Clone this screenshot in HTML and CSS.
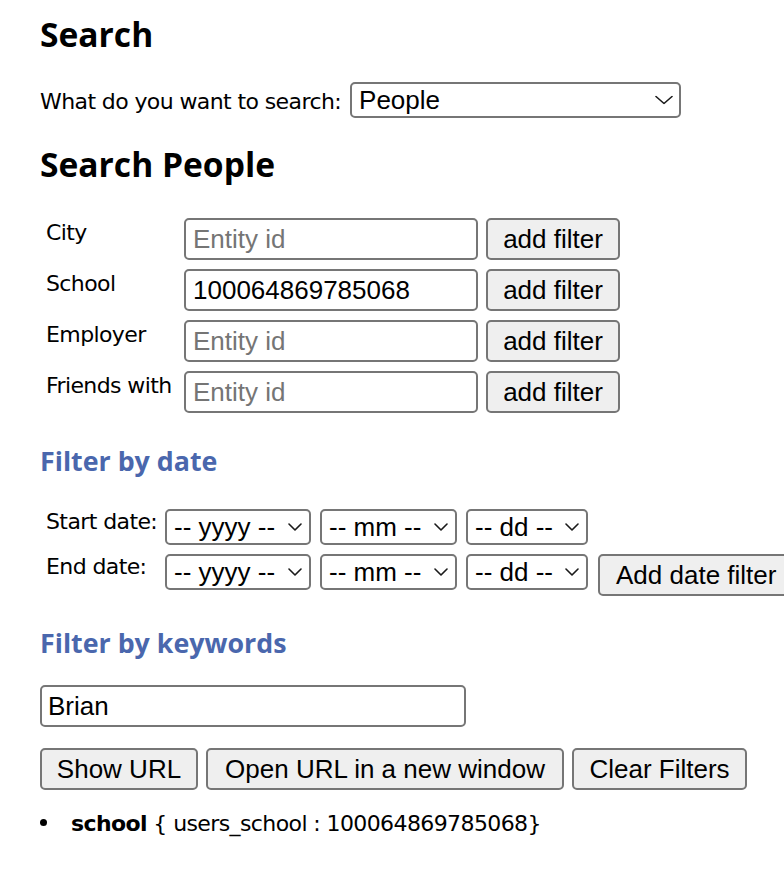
FILE: index.html
```html
<!DOCTYPE html>
<html lang="en">
<head>
<meta charset="utf-8">
<title>Search</title>
<link rel="stylesheet" href="styles.css">
</head>
<body>
<div class="page">
  <h2 class="title">Search</h2>
  <div class="type-row">
    <label class="type-label" for="type">What do you want to search:</label>
    <span class="sel sel-type">
      <select id="type"><option>People</option></select>
      <svg class="chev chev-lg" viewBox="0 0 18 9" width="18" height="9"><polyline points="1,1 9,8 17,1" /></svg>
    </span>
  </div>

  <h2 class="title title-people">Search People</h2>

  <div class="entity-grid">
    <span class="ent-label">City</span>
    <input class="ent-input" type="text" placeholder="Entity id">
    <button class="btn btn-add">add filter</button>

    <span class="ent-label">School</span>
    <input class="ent-input" type="text" value="100064869785068">
    <button class="btn btn-add">add filter</button>

    <span class="ent-label">Employer</span>
    <input class="ent-input" type="text" placeholder="Entity id">
    <button class="btn btn-add">add filter</button>

    <span class="ent-label">Friends with</span>
    <input class="ent-input" type="text" placeholder="Entity id">
    <button class="btn btn-add">add filter</button>
  </div>

  <h3 class="sub sub-date">Filter by date</h3>

  <div class="date-rows">
    <div class="date-row">
      <span class="date-label">Start date:</span>
      <span class="sel sel-y"><select><option>-- yyyy --</option></select><svg class="chev" viewBox="0 0 14 8" width="14" height="8"><polyline points="1,1 7,7 13,1" /></svg></span>
      <span class="sel sel-m"><select><option>-- mm --</option></select><svg class="chev" viewBox="0 0 14 8" width="14" height="8"><polyline points="1,1 7,7 13,1" /></svg></span>
      <span class="sel sel-d"><select><option>-- dd --</option></select><svg class="chev" viewBox="0 0 14 8" width="14" height="8"><polyline points="1,1 7,7 13,1" /></svg></span>
    </div>
    <div class="date-row">
      <span class="date-label">End date:</span>
      <span class="sel sel-y"><select><option>-- yyyy --</option></select><svg class="chev" viewBox="0 0 14 8" width="14" height="8"><polyline points="1,1 7,7 13,1" /></svg></span>
      <span class="sel sel-m"><select><option>-- mm --</option></select><svg class="chev" viewBox="0 0 14 8" width="14" height="8"><polyline points="1,1 7,7 13,1" /></svg></span>
      <span class="sel sel-d"><select><option>-- dd --</option></select><svg class="chev" viewBox="0 0 14 8" width="14" height="8"><polyline points="1,1 7,7 13,1" /></svg></span>
      <button class="btn btn-date">Add date filter</button>
    </div>
  </div>

  <h3 class="sub sub-kw">Filter by keywords</h3>

  <input class="kw-input" type="text" value="Brian">

  <div class="actions">
    <button class="btn btn-show">Show URL</button>
    <button class="btn btn-open">Open URL in a new window</button>
    <button class="btn btn-clear">Clear Filters</button>
  </div>

  <ul class="filters">
    <li class="filter-item"><b>school</b> { users_school : 100064869785068}</li>
  </ul>
</div>
</body>
</html>
```

FILE: styles.css
```css
html {
  overflow: hidden;
}

body {
  margin: 0;
  background: #ffffff;
  color: #000000;
  font-family: "DejaVu Sans", "Open Sans", sans-serif;
  font-size: 22px;
  line-height: 26px;
  letter-spacing: -0.6px;
}

.page {
  padding: 15px 0 0 40px;
}

.title {
  margin: 0;
  font-family: "Open Sans", "DejaVu Sans", sans-serif;
  font-size: 33.6px;
  line-height: 38px;
  font-weight: 700;
  letter-spacing: 0;
}

.title-people {
  margin-top: 27px;
}

.type-row {
  margin-top: 29px;
  display: flex;
  align-items: baseline;
  gap: 9px;
}

.type-label {
  white-space: nowrap;
}

/* form controls */
input, select, button {
  font-family: "Liberation Sans", Arial, sans-serif;
  font-size: 26px;
  letter-spacing: 0;
  color: #000000;
  box-sizing: border-box;
  margin: 0;
}

.sel {
  position: relative;
  display: inline-flex;
  flex-shrink: 0;
}

.sel select {
  -webkit-appearance: none;
  appearance: none;
  height: 36px;
  border: 2px solid #767676;
  border-radius: 5px;
  background: #ffffff;
  padding: 0 0 0 7px;
  width: 100%;
}

.chev {
  position: absolute;
  right: 9px;
  top: 50%;
  transform: translateY(-50%);
  pointer-events: none;
}

.chev polyline {
  fill: none;
  stroke: #1a1a1a;
  stroke-width: 1.6;
  stroke-linecap: round;
  stroke-linejoin: round;
}

.chev-lg {
  right: 8px;
}

.sel-type {
  width: 331px;
}

.sel-y { width: 146px; }
.sel-m { width: 137px; }
.sel-d { width: 122px; }

.entity-grid {
  margin-top: 35px;
  margin-left: 6px;
  display: grid;
  grid-template-columns: 138px 294px 134px;
  grid-auto-rows: 42px;
  column-gap: 0;
  row-gap: 9px;
}

.ent-label {
  padding-top: 2px;
  white-space: nowrap;
}

.ent-input, .kw-input {
  height: 42px;
  border: 2px solid #767676;
  border-radius: 5px;
  padding: 0 7px;
  background: #ffffff;
  outline: none;
}

.kw-input {
  padding: 0 6px;
}

.ent-input::placeholder {
  color: #757575;
}

.btn {
  height: 42px;
  border: 2px solid #767676;
  border-radius: 5px;
  background: #efefef;
  padding: 0 12px;
  white-space: nowrap;
  flex-shrink: 0;
}

.btn-add {
  width: 134px;
  margin-left: 8px;
}

.sub {
  margin: 0;
  font-family: "Open Sans", "DejaVu Sans", sans-serif;
  color: #4a67ad;
  font-size: 26.8px;
  line-height: 32px;
  font-weight: 700;
  letter-spacing: 0;
}

.sub-date {
  margin-top: 32px;
}

.date-rows {
  margin-top: 32px;
  margin-left: 6px;
  display: flex;
  flex-direction: column;
  gap: 9px;
}

.date-row {
  display: flex;
  align-items: flex-start;
  gap: 9px;
}

.date-label {
  width: 110px;
  flex-shrink: 0;
  line-height: 25px;
  white-space: nowrap;
}

.btn-date {
  margin-left: 1px;
  padding: 0 16px;
}

.sub-kw {
  margin-top: 31px;
}

.kw-input {
  display: block;
  margin-top: 26px;
  width: 426px;
}

.actions {
  margin-top: 21px;
  display: flex;
  gap: 8px;
}

.btn-show { width: 158px; }
.btn-open { width: 358px; }
.btn-clear { width: 175px; }

.filters {
  margin: 21px 0 0 0;
  padding: 0;
  list-style: none;
}

.filter-item::before {
  content: "";
  display: inline-block;
  width: 7px;
  height: 7px;
  border-radius: 50%;
  background: #000000;
  margin-right: 24px;
  vertical-align: 5px;
}
```
